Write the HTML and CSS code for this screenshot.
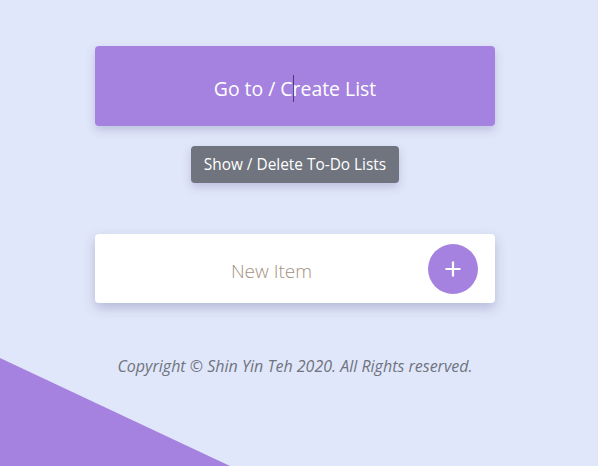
FILE: index.html
```html
<!DOCTYPE html>
<html>
<head>
<meta charset="utf-8">
<link rel="stylesheet" href="styles.css">
</head>
<body>
<div class="corner"></div>
<main class="page">
  <div class="go-btn">Go to / C<span class="caret"></span>reate List</div>
  <div class="tip">Show / Delete To-Do Lists</div>
  <div class="card">
    <span class="placeholder">New Item</span>
    <span class="add">
      <svg width="18" height="18" viewBox="0 0 18 18"><path d="M9 1.5v15M1.5 9h15" stroke="#fff" stroke-width="2.2" fill="none"/></svg>
    </span>
  </div>
  <p class="copy">Copyright © Shin Yin Teh 2020. All Rights reserved.</p>
</main>
</body>
</html>
```
FILE: styles.css
```css
html, body {
  margin: 0;
  height: 100%;
}
body {
  background: #e1e7fa;
  font-family: "Open Sans", "Noto Sans", sans-serif;
  overflow: hidden;
  position: relative;
}
.corner {
  position: absolute;
  left: 0;
  bottom: 0;
  width: 230px;
  height: 108px;
  background: #a682e0;
  clip-path: polygon(0 0, 100% 100%, 0 100%);
}
.page {
  display: flex;
  flex-direction: column;
  align-items: center;
  padding-top: 46px;
  padding-right: 8px;
}
.go-btn {
  width: 400px;
  height: 80px;
  box-sizing: border-box;
  padding-top: 4px;
  background: #a682e0;
  border-radius: 4px;
  color: #fff;
  font-size: 19.4px;
  display: flex;
  align-items: center;
  justify-content: center;
  box-shadow: 0 4px 10px rgba(80, 80, 140, 0.25);
}
.caret {
  display: inline-block;
  width: 1px;
  height: 27px;
  background: #4a3a78;
  margin-right: -1px;
}
.tip {
  margin-top: 20px;
  height: 37px;
  padding: 0 13px;
  background: #6f747e;
  color: #fff;
  border-radius: 4px;
  font-size: 15.4px;
  display: flex;
  align-items: center;
  box-shadow: 0 4px 10px rgba(80, 80, 140, 0.25);
}
.card {
  margin-top: 51px;
  width: 400px;
  height: 69px;
  box-sizing: border-box;
  background: #fff;
  border-radius: 4px;
  box-shadow: 0 5px 12px rgba(80, 80, 140, 0.3);
  display: flex;
  align-items: center;
  padding: 0 17px 0 0;
}
.placeholder {
  flex: 1;
  text-align: center;
  color: #a3927f;
  font-weight: 300;
  font-size: 19px;
  padding: 4px 0 0 20px;
}
.add {
  width: 50px;
  height: 50px;
  border-radius: 50%;
  background: #a682e0;
  display: flex;
  align-items: center;
  justify-content: center;
}
.copy {
  margin: 52px 0 0;
  font-style: italic;
  font-size: 16px;
  color: #6f747e;
}
```
